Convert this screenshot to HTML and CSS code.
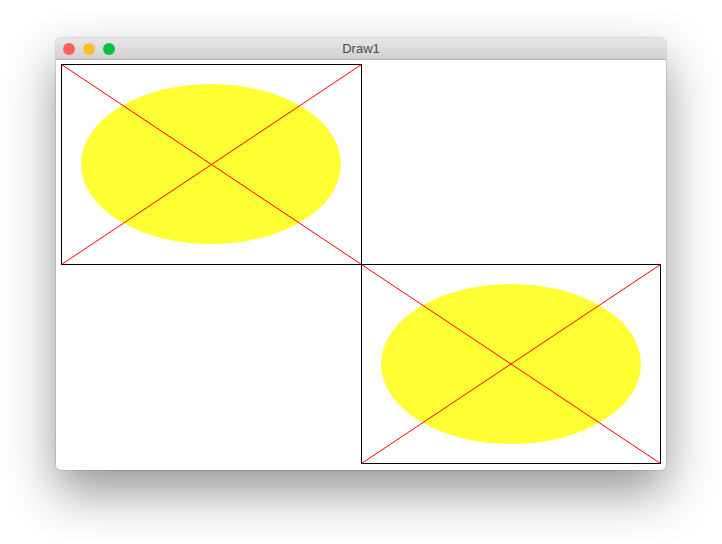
FILE: index.html
```html
<!DOCTYPE html>
<html lang="en">
  <head>
    <meta charset="UTF-8" />
    <title>Draw1</title>
    <link rel="stylesheet" href="styles.css">
  </head>
  <body>
    <div class="window">
      <div class="titlebar">
        <div class="lights">
          <span class="light red"></span>
          <span class="light amber"></span>
          <span class="light green"></span>
        </div>
        <div class="title">Draw1</div>
      </div>
      <div class="canvas">
        <svg width="610" height="410" viewBox="0 0 610 410">
          <ellipse cx="155" cy="104" rx="130" ry="80" fill="#ffff33" />
          <rect x="5.5" y="4.5" width="300" height="200" fill="none" stroke="#000" />
          <line x1="5.5" y1="4.5" x2="305.5" y2="204.5" stroke="#ff0000" />
          <line x1="5.5" y1="204.5" x2="305.5" y2="4.5" stroke="#ff0000" />

          <ellipse cx="455" cy="304" rx="130" ry="80" fill="#ffff33" />
          <rect x="305.5" y="204.5" width="299" height="199" fill="none" stroke="#000" />
          <line x1="305.5" y1="204.5" x2="604.5" y2="403.5" stroke="#ff0000" />
          <line x1="305.5" y1="403.5" x2="604.5" y2="204.5" stroke="#ff0000" />
        </svg>
      </div>
    </div>
  </body>
</html>
```

FILE: styles.css
```css
* {
  margin: 0;
  padding: 0;
  box-sizing: border-box;
}

html,
body {
  height: 100%;
}

body {
  background: #ffffff;
  font-family: "Liberation Sans", Arial, sans-serif;
  padding: 38px 0 0 56px;
}

.window {
  width: 610px;
  height: 432px;
  border-radius: 5px;
  overflow: hidden;
  background: #ffffff;
  box-shadow: 0 0 0 1px rgba(0, 0, 0, 0.1), 0 22px 50px rgba(0, 0, 0, 0.42);
}

.titlebar {
  height: 22px;
  display: flex;
  align-items: center;
  background: linear-gradient(#e8e6e8, #d2d0d2);
  border-bottom: 1px solid #b3b3b3;
  position: relative;
}

.lights {
  display: flex;
  gap: 8px;
  margin-left: 7px;
}

.light {
  width: 12px;
  height: 12px;
  border-radius: 50%;
}

.red {
  background: #fe5f57;
}

.amber {
  background: #febc2e;
}

.green {
  background: #05c13f;
}

.title {
  position: absolute;
  left: 0;
  right: 0;
  text-align: center;
  font-size: 13px;
  color: #4a4a4a;
}

.canvas {
  height: 410px;
}

.canvas svg {
  display: block;
}
```
